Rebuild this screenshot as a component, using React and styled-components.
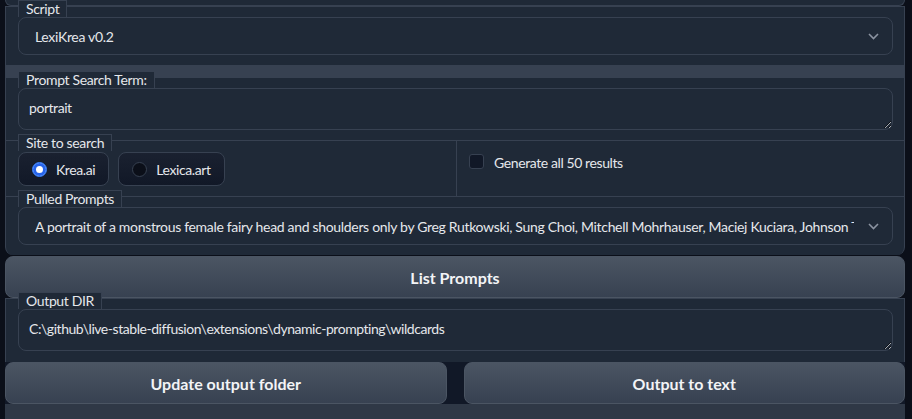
import styled, { createGlobalStyle } from 'styled-components';

const Global = createGlobalStyle`
  html, body { margin: 0; padding: 0; background: #0b0f19; color-scheme: dark; }
  body { font-family: Lato, "Noto Sans", sans-serif; }
  * { box-sizing: border-box; }
`;

const Page = styled.div`
  min-height: 100vh;
  padding: 0 7px 0 5px;
  display: flex;
  flex-direction: column;
  background: #0b0f19;
`;

const Cap = styled.div`
  height: 6px;
  background: #1f2937;
  border: 1px solid #374151;
  border-top: none;
  border-radius: 0 0 8px 8px;
`;

const Form = styled.div`
  background: #1f2937;
  border-left: 1px solid #374151;
  border-right: 1px solid #374151;
  border-radius: ${p => p.$round ? '0 0 8px 8px' : '0'};
  display: flex;
  flex-direction: column;
`;

const Block = styled.div`
  border-top: 1px solid #374151;
  padding: 0 11px ${p => p.$pb || 10}px 12px;
  display: flex;
  flex-direction: column;
  align-items: flex-start;
  min-width: 0;
`;

const Label = styled.span`
  position: relative;
  z-index: 1;
  height: 17px;
  margin-top: -7px;
  padding: 0 7px;
  background: #1f2937;
  border: 1px solid #374151;
  border-bottom: none;
  font-size: 14px;
  line-height: 16px;
  letter-spacing: -0.35px;
  color: #e5e7eb;
`;

const Strip = styled.div`
  height: 12px;
  background: #374151;
`;

const Select = styled.div`
  position: relative;
  width: 100%;
  height: 38px;
  border: 1px solid #374151;
  border-radius: 8px;
  background: #1f2937;
  display: flex;
  align-items: center;
  padding: 0 38px 0 16px;
  font-size: 14px;
  letter-spacing: -0.32px;
  color: #e5e7eb;
  white-space: nowrap;
  overflow: hidden;
`;

const SelectText = styled.span`
  overflow: hidden;
  min-width: 0;
`;

const Chevron = styled.svg`
  position: absolute;
  right: 13px;
  top: 15px;
`;

const Area = styled.textarea`
  width: 100%;
  height: 42px;
  border: 1px solid #374151;
  border-radius: 8px;
  background: #1f2937;
  color: #e5e7eb;
  font: 14px Lato, "Noto Sans", sans-serif;
  letter-spacing: -0.45px;
  padding: 10px 10px;
  resize: vertical;
  outline: none;
`;

const Row = styled.div`
  display: grid;
  grid-template-columns: 450px 1fr;
  border-top: 1px solid #374151;
  & > ${Block} { border-top: none; }
`;

const Radios = styled.div`
  display: flex;
  gap: 9px;
  margin-top: 1px;
`;

const RadioBox = styled.label`
  height: 34px;
  display: flex;
  align-items: center;
  gap: 9px;
  padding: 0 13px 0 13px;
  border: 1px solid #374151;
  border-radius: 8px;
  background: linear-gradient(to top, #111827, #1a2130);
  font-size: 14px;
  letter-spacing: -0.4px;
  color: #e5e7eb;
`;

const Dot = styled.span`
  width: 15px;
  height: 15px;
  border-radius: 50%;
  border: 1px solid ${p => p.$on ? '#3b82f6' : '#374151'};
  background: ${p => p.$on ? '#2563eb' : '#0b0f19'};
  box-shadow: ${p => p.$on ? 'inset 0 0 0 3px #2563eb, inset 0 0 0 8px #fff' : 'none'};
`;

const CheckCol = styled.div`
  border-left: 1px solid #374151;
  padding: 13px 12px;
  display: flex;
  align-items: flex-start;
  gap: 10px;
  font-size: 14px;
  letter-spacing: -0.4px;
  color: #e5e7eb;
`;

const Box = styled.span`
  width: 15px;
  height: 15px;
  flex: none;
  border: 1px solid #374151;
  border-radius: 3px;
  background: #111827;
`;

const Button = styled.button`
  height: 42px;
  width: 100%;
  border: 1px solid #4b5563;
  border-radius: 8px;
  background: linear-gradient(to bottom, #4b5563, #374151);
  color: #f3f4f6;
  font: 700 16px Lato, "Noto Sans", sans-serif;
  cursor: pointer;
`;

const TopButton = styled(Button)`
  margin-top: 1px;
`;

const ButtonRow = styled.div`
  display: grid;
  grid-template-columns: 1fr 1fr;
  gap: 17px;
  background: #111827;
`;

const Footer = styled.div`
  flex: 1;
  background: #2f3846;
`;

const chevron = (
  <Chevron width="11" height="7" viewBox="0 0 11 7">
    <polyline points="1,1 5.5,5.5 10,1" fill="none" stroke="#8b93a1" strokeWidth="1.6" />
  </Chevron>
);

export default function App() {
  return (
    <Page>
      <Global />
      <Cap />
      <Form>
        <Block>
          <Label>Script</Label>
          <Select><SelectText>LexiKrea v0.2</SelectText>{chevron}</Select>
        </Block>
      </Form>
      <Strip />
      <Form $round>
        <Block>
          <Label>Prompt Search Term:</Label>
          <Area defaultValue="portrait" />
        </Block>
        <Row>
          <Block>
            <Label>Site to search</Label>
            <Radios>
              <RadioBox><Dot $on />Krea.ai</RadioBox>
              <RadioBox><Dot />Lexica.art</RadioBox>
            </Radios>
          </Block>
          <CheckCol><Box />Generate all 50 results</CheckCol>
        </Row>
        <Block>
          <Label>Pulled Prompts</Label>
          <Select>
            <SelectText>A portrait of a monstrous female fairy head and shoulders only by Greg Rutkowski, Sung Choi, Mitchell Mohrhauser, Maciej Kuciara, Johnson Ting, Maxim Verehin</SelectText>
            {chevron}
          </Select>
        </Block>
      </Form>
      <TopButton>List Prompts</TopButton>
      <Form>
        <Block $pb={11}>
          <Label>Output DIR</Label>
          <Area defaultValue={'C:\\github\\live-stable-diffusion\\extensions\\dynamic-prompting\\wildcards'} />
        </Block>
      </Form>
      <ButtonRow>
        <Button>Update output folder</Button>
        <Button>Output to text</Button>
      </ButtonRow>
      <Footer />
    </Page>
  );
}
